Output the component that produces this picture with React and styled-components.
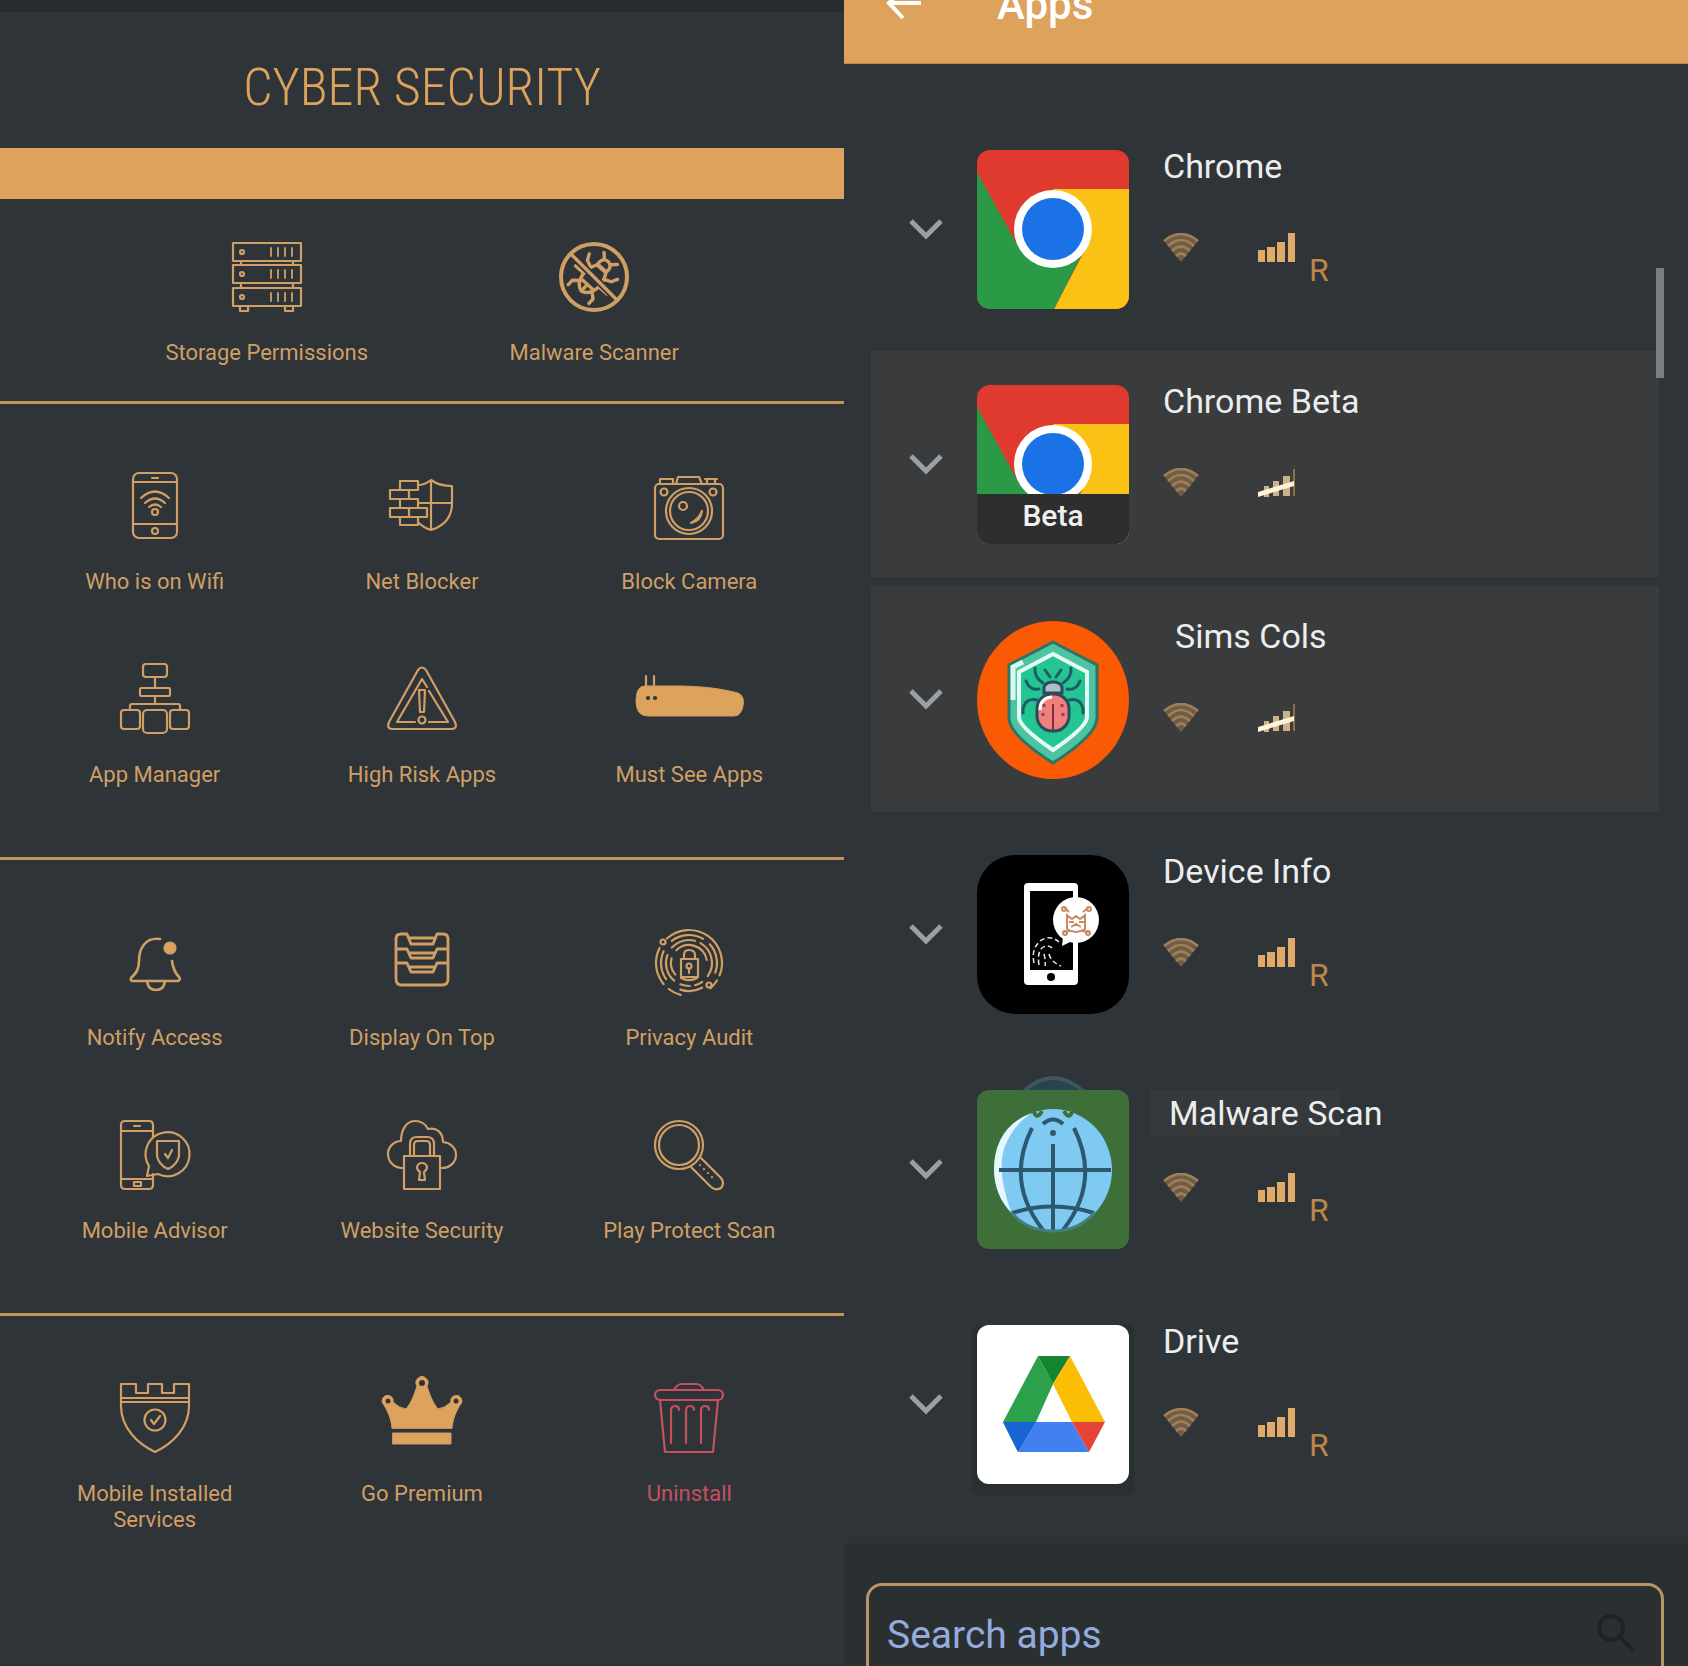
import React from "react";
import styled, { createGlobalStyle } from "styled-components";

const colors = {
    bg: "#2f3438",
    accent: "#dda25c",
    line: "#cf9f65",
    danger: "#c4515d",
};

const GlobalStyle = createGlobalStyle`
    * {
        box-sizing: border-box;
    }

    body {
        margin: 0;
        background-color: ${colors.bg};
        font-family: Roboto, "Liberation Sans", sans-serif;
    }
`;

const Page = styled.div`
    display: flex;
    height: 100vh;
    overflow: hidden;
`;

const Dashboard = styled.main`
    flex: 1;
    min-width: 0;
    border-top: 12px solid #262b2e;
    background-color: ${colors.bg};
`;

const Title = styled.h1`
    margin: 0;
    height: 136px;
    display: flex;
    align-items: center;
    justify-content: center;
    padding-top: 16px;
    font-family: "Roboto Condensed", "Liberation Sans Narrow", Roboto, sans-serif;
    font-size: 52px;
    font-weight: 300;
    line-height: 56px;
    color: ${colors.accent};
`;

const Band = styled.div`
    height: 51px;
    background-color: ${colors.accent};
`;

const Section = styled.section`
    display: grid;
    grid-template-columns: repeat(${(props) => (props.$wide ? 2 : 3)}, 1fr);
    row-gap: 69px;
    padding: ${(props) => (props.$wide ? "43px 86px 35px 103px" : "67px 21px 69px")};
    border-bottom: ${(props) => (props.$last ? "none" : "3px solid #c3955c")};
`;

const Tool = styled.button`
    display: flex;
    flex-direction: column;
    align-items: center;
    gap: 28px;
    padding: 0;
    border: none;
    background: none;
    font-family: inherit;
    font-size: 22px;
    line-height: 26px;
    cursor: pointer;
    color: ${(props) => (props.$danger ? colors.danger : colors.line)};
`;

const ToolLabel = styled.span`
    max-width: 210px;
    text-align: center;
`;

const ToolSvg = styled.svg`
    width: 70px;
    height: 70px;
    overflow: visible;
    fill: none;
    stroke: currentColor;
    stroke-width: 2.2;
    stroke-linejoin: round;
    stroke-linecap: round;
`;

const AppsPanel = styled.aside`
    position: relative;
    flex: 1;
    min-width: 0;
    display: flex;
    flex-direction: column;
    background-color: ${colors.bg};
`;

const AppBar = styled.header`
    flex: none;
    display: flex;
    align-items: flex-end;
    gap: 75px;
    height: 64px;
    padding: 0 40px 34px;
    overflow: hidden;
    background-color: ${colors.accent};
    border-bottom: 1px solid #b98a50;
    color: #fff;
`;

const BackButton = styled.button`
    display: flex;
    padding: 0 0 9px;
    border: none;
    background: none;
    color: inherit;
    cursor: pointer;
`;

const BarTitle = styled.h2`
    margin: 0;
    font-size: 42px;
    font-weight: 500;
    line-height: 48px;
`;

const AppList = styled.ul`
    flex: none;
    display: flex;
    flex-direction: column;
    gap: 9px;
    margin: 0;
    padding: 52px 29px 26px 27px;
    list-style: none;
`;

const AppRow = styled.li`
    display: flex;
    align-items: center;
    height: 226px;
    padding-left: 37px;
    background-color: ${(props) => (props.$active ? "#3a3b3c" : "transparent")};
`;

const ExpandButton = styled.button`
    display: flex;
    margin-right: 33px;
    padding: 2px 0 0;
    border: none;
    background: none;
    color: #9c9fa1;
    cursor: pointer;
`;

const AppSvg = styled.svg`
    flex: none;
    width: 152px;
    height: 159px;
    overflow: visible;
`;

const AppInfo = styled.div`
    height: 159px;
    margin-left: 34px;
`;

const NameBox = styled.div`
    height: 83px;
`;

const AppName = styled.h3`
    margin: 0;
    padding-left: ${(props) => (props.$indent ? "12px" : "0")};
    font-size: 34px;
    font-weight: 400;
    line-height: 32px;
    white-space: nowrap;
    color: #eceded;
`;

const MarkedName = styled(AppName)`
    width: 190px;
    margin-left: -13px;
    padding-left: 19px;
    line-height: 46px;
    background-color: #36393b;
`;

const Status = styled.div`
    display: flex;
    align-items: flex-start;
`;

const StatusSvg = styled.svg`
    width: ${(props) => props.$width}px;
    height: 29px;
    margin-right: ${(props) => props.$gap}px;
`;

const Roaming = styled.span`
    padding-top: 22px;
    font-size: 32px;
    line-height: 30px;
    color: #bb8748;
`;

const ScrollThumb = styled.div`
    position: absolute;
    top: 268px;
    right: 24px;
    width: 8px;
    height: 110px;
    background-color: #7b7f81;
`;

const SearchArea = styled.div`
    flex: none;
    padding: 40px 24px 24px 22px;
    background-color: #2a2f32;
`;

const SearchBox = styled.label`
    display: flex;
    align-items: center;
    height: 104px;
    padding: 0 24px 0 18px;
    border: 3px solid #b99467;
    border-radius: 16px;
`;

const SearchInput = styled.input`
    flex: 1;
    min-width: 0;
    padding: 0;
    border: none;
    outline: none;
    background: none;
    font-family: inherit;
    font-size: 39px;
    line-height: 48px;
    color: #94abdd;

    &::placeholder {
        color: #94abdd;
        opacity: 1;
    }
`;

// arc of radius r round (35, 36), angles in degrees clockwise from the right
const arc = (r, from, to) => {
    const point = (deg) => {
        const rad = (deg * Math.PI) / 180;
        return `${(35 + r * Math.cos(rad)).toFixed(1)} ${(36 + r * Math.sin(rad)).toFixed(1)}`;
    };
    return `M${point(from)}A${r} ${r} 0 ${to - from > 180 ? 1 : 0} 1 ${point(to)}`;
};

const fingerprint = [
    [33, 228, 382],
    [28, 232, 300],
    [28, 318, 380],
    [33, 140, 207],
    [28, 145, 205],
    [23, 222, 285],
    [23, 300, 395],
    [18, 225, 350],
    [23, 130, 200],
    [18, 140, 195],
    [33, 105, 128],
    [28, 62, 108],
    [33, 32, 50],
    [23, 55, 75],
    [23, 88, 112],
    [17, 62, 118],
].map(([r, from, to]) => arc(r, from, to));

const toolIcons = {
    server: (
        <>
            {[1, 23, 46].map((y) => (
                <g key={y}>
                    <rect x="1" y={y} width="68" height="18" />
                    <circle cx="10" cy={y + 9} r="2" />
                    <path d={`M39 ${y + 5}v8M46 ${y + 5}v8M53 ${y + 5}v8M60 ${y + 5}v8`} strokeWidth="1.8" />
                </g>
            ))}
            <path d="M9 19v4M61 19v4M9 41v5M61 41v5M8 64v5h8v-5M53 64v5h8v-5" />
        </>
    ),
    malware: (
        <g strokeWidth="3.4">
            <circle cx="35" cy="35" r="33" strokeWidth="4" />
            <g transform="rotate(42 35 35)">
                <path d="M29 20a6 6 0 0 1 12 0v3H29zM30 14l-4-4M40 14l4-4" />
                <path d="M29 24h12q5 8 4 17q-2 11-10 13q-8-2-10-13q-1-9 4-17z" />
                <path d="M26 30l-7-3l-3-6M44 30l7-3l3-6M25 39H14M45 39h11M27 47l-6 5v6M43 47l6 5v6" />
                <path d="M27 45h16M35 45v8" />
            </g>
            <path d="M17 17l37 37" stroke={colors.bg} strokeWidth="7" />
            <path d="M12 12l46 46" />
        </g>
    ),
    wifiPhone: (
        <>
            <rect x="13" y="2" width="44" height="65" rx="6" />
            <path d="M13 11h44M13 53h44M32 7h6M21 27q14-13 28 0M25 32q10-9 20 0M29 36q6-5 12 0" />
            <circle cx="35" cy="41" r="3" />
            <circle cx="35" cy="60" r="3" />
        </>
    ),
    netBlocker: (
        <>
            <path d="M31 14q7 0 13-5q8 6 21 6v17c0 14-8 23-21 27q-7-2-12-7M44 9v50M31 32h34" />
            <path d="M31 14v-4H13v9h18M31 14v5M3 19h28M3 19v9h28M22 19v9M13 28v9M31 28v9M3 37h37v9H3zM22 37v9M13 46v8h18v-8" />
        </>
    ),
    camera: (
        <>
            <rect x="1" y="13" width="68" height="55" rx="4" />
            <path d="M22 13l2-7h21l3 7M6 13V8h13v5M53 13V8h8v5M51 8h12" />
            <circle cx="35" cy="40" r="23" />
            <circle cx="35" cy="40" r="19" />
            <circle cx="29" cy="35" r="4" />
            <circle cx="10" cy="21" r="3.5" />
            <circle cx="59" cy="21" r="3.5" />
            <path d="M48 40q-1 10-11 12q8-4 11-12" />
        </>
    ),
    appManager: (
        <>
            <rect x="23" y="0" width="24" height="13" rx="3" />
            <rect x="20" y="24" width="30" height="8" rx="1" />
            <path d="M35 13v11M35 32v8M10 46v-4q0-2 2-2h46q2 0 2 2v4" />
            <rect x="1" y="46" width="19" height="19" rx="3" />
            <rect x="23" y="46" width="24" height="23" rx="4" />
            <rect x="50" y="46" width="19" height="19" rx="3" />
        </>
    ),
    risk: (
        <>
            <path d="M31 6q4-5 8 0l29 52q3 7-4 7H6q-7 0-4-7z" />
            <path d="M28 58H10l25-43l5 8M42 27l19 31H42" />
            <path d="M32 26h6l-1 22h-4z" />
            <circle cx="35" cy="56" r="3.5" />
        </>
    ),
    router: (
        <>
            <path
                d="M-9 22H20C50 22 68 25 84 29Q91 32 89 42Q87 52 80 52H-6Q-18 52-18 37Q-18 22-9 22z"
                fill={colors.accent}
                strokeWidth="1"
            />
            <path d="M-8 23V12M0 23V12" />
            <circle cx="-6" cy="34" r="1" stroke={colors.bg} />
            <circle cx="1" cy="34" r="1" stroke={colors.bg} />
        </>
    ),
    bell: (
        <>
            <path
                d="M40 12C25 10 19 22 19 34C19 43 16 46 11 51Q10 54 13 54H58Q61 53 59 50C55 46 53 42 52 34M27 54q1 9 9 9q8 0 9-9"
                strokeWidth="2.6"
            />
            <circle cx="50" cy="21" r="5.5" fill={colors.accent} />
        </>
    ),
    drawers: (
        <g strokeWidth="2.8">
            <path d="M9 12v40q0 6 6 6h40q6 0 6-6V12" />
            <path d="M9 12q0-5 5-5h6l4 10h22l4-10h6q5 0 5 5M22 11h26" />
            <path d="M9 22h11l4 9h22l4-9h11M22 26h26" />
            <path d="M9 36h11l4 9h22l4-9h11M22 40h26" />
        </g>
    ),
    fingerprint: (
        <>
            {fingerprint.map((d) => (
                <path key={d} d={d} />
            ))}
            <circle cx="9" cy="15" r="2.5" />
            <circle cx="55" cy="58" r="2.5" />
            <rect x="27" y="32" width="17" height="18" />
            <path d="M30 32v-4q0-5 5-5q6 0 6 5v4" />
            <circle cx="35" cy="39" r="2.5" />
            <path d="M35 42v4" />
        </>
    ),
    advisor: (
        <>
            <path d="M33 17V5q0-4-4-4H5q-4 0-4 4v60q0 4 4 4h24q4 0 4-4V54M1 11h32M1 59h32M14 6h6" />
            <rect x="14" y="62" width="7" height="4" />
            <path d="M29 46A22 22 0 1 1 38 54L27 56z" />
            <path d="M37 21h22v15q-2 9-11 13q-9-4-11-13zM45 34l3 4l4-8" />
        </>
    ),
    cloudLock: (
        <>
            <path d="M17 48H14C6 47 1 41 1 34C1 27 7 21 14 21C14 9 20 1 28 1C35 1 39 5 41 9C50 7 56 13 56 22C64 23 69 28 69 35C69 42 63 48 55 48H53" />
            <rect x="17" y="36" width="36" height="33" />
            <path d="M23 36V24q0-7 7-7h10q7 0 7 7v12M27 36V25q0-4 4-4h8q4 0 4 4v11" />
            <path d="M32 60l1-8q-3-2-3-5q1-4 5-4q4 0 5 4q0 3-3 5l1 8z" />
        </>
    ),
    magnifier: (
        <>
            <circle cx="25" cy="25" r="24" />
            <circle cx="25" cy="25" r="20" />
            <path d="M37 47l20 20q5 4 10 1q4-5 0-10L47 38" />
            <path d="M46 45v.1M50 49v.1M54 53v.1M58 57v.1" />
        </>
    ),
    castle: (
        <>
            <path d="M1 15V1h15v9h12V1h14v9h12V1h15v14zM1 19h68" />
            <path d="M1 15v8c0 22 17 38 34 46c17-8 34-24 34-46v-8" />
            <circle cx="35" cy="37" r="10.5" />
            <path d="M31 37l3 4l6-8" />
        </>
    ),
    crown: (
        <>
            <path
                d="M5 45C4 35 1 29-3 22A5.5 5.5 0 1 1 6 19Q12 25 19 26C25 19 28 9 30 3A6 6 0 1 1 40 3C42 9 45 19 51 26Q58 25 64 19A5.5 5.5 0 1 1 73 22C69 29 66 35 65 45zM6 50h58v11H6z"
                fill={colors.accent}
                strokeWidth="1"
            />
            <circle cx="35" cy="0" r="3" fill={colors.bg} stroke="none" />
            <circle cx="1" cy="18" r="2.5" fill={colors.bg} stroke="none" />
            <circle cx="69" cy="18" r="2.5" fill={colors.bg} stroke="none" />
        </>
    ),
    trash: (
        <>
            <rect x="1" y="7" width="68" height="10" rx="5" />
            <path d="M20 7q3-6 8-6h14q5 0 8 6M6 17l5 52h48l5-52" />
            <path d="M17 60V28q0-5 4-5q4 0 4 4M32 60V28q0-5 4-5q4 0 4 4M47 60V28q0-5 4-5q4 0 4 4" />
        </>
    ),
};

const sections = [
    [
        { icon: "server", label: "Storage Permissions" },
        { icon: "malware", label: "Malware Scanner" },
    ],
    [
        { icon: "wifiPhone", label: "Who is on Wifi" },
        { icon: "netBlocker", label: "Net Blocker" },
        { icon: "camera", label: "Block Camera" },
        { icon: "appManager", label: "App Manager" },
        { icon: "risk", label: "High Risk Apps" },
        { icon: "router", label: "Must See Apps" },
    ],
    [
        { icon: "bell", label: "Notify Access" },
        { icon: "drawers", label: "Display On Top" },
        { icon: "fingerprint", label: "Privacy Audit" },
        { icon: "advisor", label: "Mobile Advisor" },
        { icon: "cloudLock", label: "Website Security" },
        { icon: "magnifier", label: "Play Protect Scan" },
    ],
    [
        { icon: "castle", label: "Mobile Installed Services" },
        { icon: "crown", label: "Go Premium" },
        { icon: "trash", label: "Uninstall", danger: true },
    ],
];

const ChromeLogo = ({ beta }) => {
    const clip = beta ? "chrome-beta-clip" : "chrome-clip";
    return (
        <AppSvg viewBox="0 0 152 159" aria-hidden="true">
            <clipPath id={clip}>
                <rect width="152" height="159" rx="13" />
            </clipPath>
            <g clipPath={`url(#${clip})`}>
                <rect width="152" height="159" fill="#df3a2d" />
                <path d="M76 39H152V159H77L108 100z" fill="#fbc216" />
                <path d="M0 22L42 98L76 112L106 102L77 159H0z" fill="#2a9a47" />
                <circle cx="76" cy="79" r="39" fill="#fff" />
                <circle cx="76" cy="79" r="31" fill="#1b72e6" />
                {beta && <rect y="109" width="152" height="50" fill="#2d2e2e" />}
            </g>
            {beta && (
                <text x="76" y="141" textAnchor="middle" fontSize="30" fontWeight="500" fill="#f0f0f0">
                    Beta
                </text>
            )}
        </AppSvg>
    );
};

const BugShieldLogo = () => (
    <AppSvg viewBox="0 0 152 159" aria-hidden="true">
        <ellipse cx="76" cy="80" rx="76" ry="79" fill="#fb5a05" />
        <path d="M76 22L120 45V98Q120 115 76 143Q32 115 32 98V45z" fill="#4cc3a2" stroke="#2c7566" strokeWidth="3" />
        <path d="M76 34L110 52V97Q110 107 76 130Q42 107 42 97V52z" fill="#24c593" stroke="#e3fbf3" strokeWidth="4" />
        <path d="M36 80V47L46 42" fill="none" stroke="#d8f7ee" strokeWidth="5" />
        <g fill="none" stroke="#1d5c66" strokeWidth="3" strokeLinecap="round">
            <path d="M68 50l5 7M84 50l-5 7M58 48q-1 9 8 15M94 48q1 9-8 15M49 61q4 10 13 8M103 61q-4 10-13 8" />
            <path d="M60 80q-11-3-14 9v4M92 80q11-3 14 9v4" />
        </g>
        <path d="M67 73v-6q2-5 9-5q7 0 9 5v6z" fill="#aebfcb" stroke="#2b4a5c" strokeWidth="3" />
        <rect x="60" y="74" width="32" height="37" rx="15" fill="#f08080" stroke="#2b4a5c" strokeWidth="3" />
        <path d="M63 90q0-12 12-13" fill="none" stroke="#fff" strokeWidth="3" />
        <path d="M76 84v26" stroke="#7c2f3b" strokeWidth="2" />
        <path d="M67 84v3M85 84v3M66 93v3M86 93v3" stroke="#9c3a45" strokeWidth="3" />
    </AppSvg>
);

const DeviceLogo = () => (
    <AppSvg viewBox="0 0 152 159" aria-hidden="true">
        <rect width="152" height="159" rx="38" fill="#000" />
        <rect x="47" y="28" width="54" height="102" rx="4" fill="#fff" />
        <rect x="53" y="36" width="43" height="79" fill="#000" />
        <circle cx="74" cy="122" r="4" fill="#000" />
        <path d="M86 82l-1 9l10-5z" fill="#fff" />
        <circle cx="99" cy="65" r="23" fill="#fff" />
        <g fill="none" stroke="#c98a62" strokeWidth="2">
            <path d="M90 60v14q9 6 18 0V60l-5 4l-4-3l-4 3zM92 67h5M102 67h5M94 72l5-3l5 3" />
            <path d="M92 57l-5-5M106 57l6-5M93 76l-7 1M105 76l7 1" />
            <circle cx="87" cy="54" r="2" />
            <circle cx="112" cy="54" r="2" />
            <circle cx="88" cy="78" r="2" />
            <circle cx="111" cy="78" r="2" />
        </g>
        <g fill="none" stroke="#e8e8e8" strokeWidth="1.5" strokeDasharray="5 3">
            <path d="M57 108q-3-14 6-22q10-7 19 1" />
            <path d="M62 110q-2-12 3-17q7-5 12 2" />
            <path d="M67 99q2 8 1 12M72 99q2 8 12 12" />
        </g>
    </AppSvg>
);

const GlobeLogo = () => (
    <AppSvg viewBox="0 0 152 159" aria-hidden="true">
        <path d="M46 2Q76-26 107 2" fill="#27434d" stroke="#3f5562" strokeWidth="4" />
        <rect width="152" height="159" rx="12" fill="#3e6f39" />
        <ellipse cx="76" cy="80" rx="59" ry="61" fill="#7ecaf3" />
        <path d="M54 23Q17 38 17 80Q18 106 34 122Q19 80 28 56Q36 36 54 23z" fill="#e6f7ff" />
        <g fill="none" stroke="#2c5870" strokeWidth="4">
            <path d="M22 80h112M76 54v87M55 38Q28 92 66 140M97 38Q124 92 86 140" />
            <path d="M35 123Q76 110 117 123M66 34q10-9 20 0" />
            <path d="M57 22q3 8 8-1M95 22q-3 8-8-1" stroke="#3e6f39" />
        </g>
        <circle cx="76" cy="43" r="3" fill="#2c5870" />
        <path d="M34 122Q50 141 76 141Q102 141 118 122" fill="none" stroke="#45807f" strokeWidth="3" />
    </AppSvg>
);

const DriveLogo = () => (
    <AppSvg viewBox="0 0 152 159" aria-hidden="true">
        <rect x="-5" y="0" width="162" height="170" rx="6" fill="#2a2f32" />
        <rect width="152" height="159" rx="12" fill="#fff" />
        <path d="M61 31L76 59L59 97L41 127L26 97z" fill="#2ca14c" />
        <path d="M61 31H93L76 59z" fill="#138430" />
        <path d="M93 31L128 97H95L76 59z" fill="#fcbd05" />
        <path d="M26 97H59L41 127z" fill="#1765d2" />
        <path d="M59 97H95L112 127H41z" fill="#4280ef" />
        <path d="M95 97H128L112 127z" fill="#e54335" />
    </AppSvg>
);

const apps = [
    { name: "Chrome", logo: <ChromeLogo /> },
    { name: "Chrome Beta", logo: <ChromeLogo beta />, blocked: true },
    { name: "Sims Cols", logo: <BugShieldLogo />, blocked: true, indent: true },
    { name: "Device Info", logo: <DeviceLogo /> },
    { name: "Malware Scan", logo: <GlobeLogo />, marked: true },
    { name: "Drive", logo: <DriveLogo /> },
];

const WifiStatus = () => (
    <StatusSvg $width={36} $gap={58} viewBox="0 0 36 29" role="img" aria-label="Wifi allowed">
        <path d="M1 8Q18-7 35 8L18 29z" fill="#6f5d47" />
        <g fill="none" stroke="#a17f56" strokeWidth="2.6">
            <path d="M1 8Q18-6 35 8M5 13Q18 1 31 13M9 18Q18 9 27 18M13 23q5-5 10 0" />
        </g>
    </StatusSvg>
);

const SignalStatus = ({ blocked }) => (
    <StatusSvg
        $width={39}
        $gap={13}
        viewBox="0 0 39 29"
        role="img"
        aria-label={blocked ? "Mobile data blocked" : "Mobile data allowed"}
    >
        {blocked ? (
            <>
                <path d="M7 18h5v11H7zM16 13h6v15h-6zM26 8h7v20h-7z" fill="#cdb189" />
                <path d="M37 1v27" stroke="#8d704d" strokeWidth="2" />
                <path d="M1 29L37 18V13L1 24z" fill="#fff2d8" />
            </>
        ) : (
            <path d="M1 17h7v12H1zM10 14h8v15h-8zM20 9h8v20h-8zM31 0h7v29h-7z" fill="#e0aa68" />
        )}
    </StatusSvg>
);

const AppItem = ({ name, logo, blocked, indent, marked }) => (
    <AppRow $active={blocked}>
        <ExpandButton aria-label={`Expand ${name}`}>
            <svg width="36" height="24" viewBox="0 0 36 24" fill="none" stroke="currentColor" strokeWidth="5">
                <path d="M3 3l15 15L33 3" />
            </svg>
        </ExpandButton>
        {logo}
        <AppInfo>
            <NameBox>{marked ? <MarkedName>{name}</MarkedName> : <AppName $indent={indent}>{name}</AppName>}</NameBox>
            <Status>
                <WifiStatus />
                <SignalStatus blocked={blocked} />
                {!blocked && <Roaming>R</Roaming>}
            </Status>
        </AppInfo>
    </AppRow>
);

const App = () => {
    return (
        <>
            <GlobalStyle />
            <Page>
                <Dashboard>
                    <Title>CYBER SECURITY</Title>
                    <Band />
                    {sections.map((tools, index) => (
                        <Section key={index} $wide={index === 0} $last={index === sections.length - 1}>
                            {tools.map((tool) => (
                                <Tool key={tool.label} $danger={tool.danger}>
                                    <ToolSvg viewBox="0 0 70 70" aria-hidden="true">
                                        {toolIcons[tool.icon]}
                                    </ToolSvg>
                                    <ToolLabel>{tool.label}</ToolLabel>
                                </Tool>
                            ))}
                        </Section>
                    ))}
                </Dashboard>
                <AppsPanel>
                    <AppBar>
                        <BackButton aria-label="Back">
                            <svg width="38" height="32" viewBox="0 0 38 32" fill="none" stroke="#fff" strokeWidth="4">
                                <path d="M37 15H6M19 1L5 15l14 15" />
                            </svg>
                        </BackButton>
                        <BarTitle>Apps</BarTitle>
                    </AppBar>
                    <AppList>
                        {apps.map((app) => (
                            <AppItem key={app.name} {...app} />
                        ))}
                    </AppList>
                    <SearchArea>
                        <SearchBox>
                            <SearchInput type="search" placeholder="Search apps" aria-label="Search apps" />
                            <svg width="42" height="42" viewBox="0 0 42 42" fill="none" stroke="#1f2325" strokeWidth="4">
                                <circle cx="16" cy="14" r="12" />
                                <path d="M25 23l14 14" />
                            </svg>
                        </SearchBox>
                    </SearchArea>
                    <ScrollThumb />
                </AppsPanel>
            </Page>
        </>
    );
};

export default App;
